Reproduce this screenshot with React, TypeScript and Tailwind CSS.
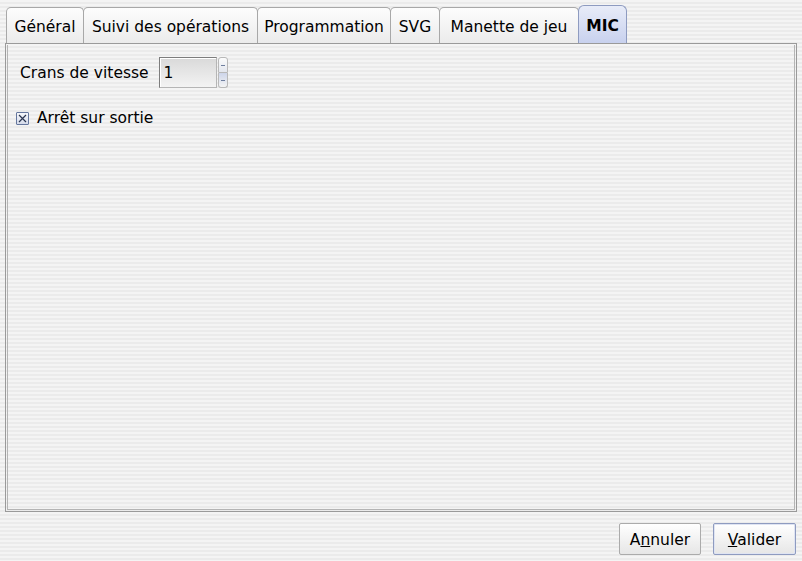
import React from 'react';

const tabs = [
  { label: 'Général', width: 'w-[78px]' },
  { label: 'Suivi des opérations', width: 'w-[175px]' },
  { label: 'Programmation', width: 'w-[134px]' },
  { label: 'SVG', width: 'w-[50px]' },
  { label: 'Manette de jeu', width: 'w-[140px]' },
];

const stripes =
  'bg-[repeating-linear-gradient(to_bottom,#f4f4f4_0px,#f4f4f4_2px,#ebebeb_2px,#ebebeb_4px)]';

function SpinBox() {
  return (
    <div className="flex items-stretch h-[31px]">
      <div className="w-[58px] border border-[#7d7d7d] border-r-[#b5b5b5] border-b-[#b5b5b5] bg-[linear-gradient(to_bottom,#d9d9d9,#f3f3f3)] shadow-[inset_1px_1px_0_#ffffff] flex items-center pl-[4px] pt-[2px]">
        1
      </div>
      <div className="ml-px w-[10px] flex flex-col">
        <div className="flex-1 border border-[#b8b8b8] rounded-t-[3px] bg-[linear-gradient(to_bottom,#fbfbfb,#e3e6ee)] flex items-center justify-center">
          <div className="w-[4px] h-px bg-[#6f7f9f]" />
        </div>
        <div className="flex-1 border border-t-0 border-[#b8b8b8] rounded-b-[3px] bg-[linear-gradient(to_bottom,#cdd5ea,#f4f4f4)] flex items-center justify-center">
          <div className="w-[4px] h-px bg-[#6f7f9f]" />
        </div>
      </div>
    </div>
  );
}

function CheckBox() {
  return (
    <div className="w-[13px] h-[13px] shrink-0 border border-[#65779e] rounded-[1px] bg-[linear-gradient(to_bottom,#f6f7fb,#d5dbea)] flex items-center justify-center">
      <svg width="9" height="9" viewBox="0 0 9 9">
        <path d="M1 1 L8 8 M8 1 L1 8" stroke="#2a3550" strokeWidth="1.2" />
      </svg>
    </div>
  );
}

export default function App() {
  return (
    <div
      className={`w-[802px] h-[561px] ${stripes} font-['DejaVu_Sans',sans-serif] text-[15.5px] text-black flex flex-col`}
    >
      {/* Tab bar */}
      <div className="flex items-end h-[43px] pl-[6px]">
        {tabs.map((tab, i) => (
          <div
            key={tab.label}
            className={`${tab.width} h-[36px] ${i > 0 ? '-ml-px' : ''} border border-b-0 border-[#a8a8a8] rounded-t-[5px] bg-[linear-gradient(to_bottom,#fdfdfd,#ebebeb)] flex items-center justify-center whitespace-nowrap pt-[4px]`}
          >
            {tab.label}
          </div>
        ))}
        <div className="-ml-px w-[49px] h-[38px] border border-b-0 border-[#8e9bc0] rounded-t-[6px] bg-[linear-gradient(to_bottom,#e8ecf8,#c8d1ee)] flex items-center justify-center font-bold pt-[4px]">
          MIC
        </div>
      </div>

      {/* Pane */}
      <div className="mx-[5px] h-[469px] border border-[#9a9a9a] p-px">
        <div className="h-full border border-[#b4b4b4] border-t-0 pl-[12px] pt-[12px]">
          <div className="flex items-center gap-[10px]">
            <span className="pt-[2px]">Crans de vitesse</span>
            <SpinBox />
          </div>
          <div className="flex items-center gap-[8px] mt-[19px] -ml-[4px]">
            <CheckBox />
            <span>Arrêt sur sortie</span>
          </div>
        </div>
      </div>

      {/* Buttons */}
      <div className="flex justify-end gap-[12px] pr-[6px] pt-[11px]">
        <button className="w-[82px] h-[32px] pt-[3px] border border-[#ababab] rounded-[2px] bg-[linear-gradient(to_bottom,#ffffff,#e6e6e6)]">
          A<span className="underline">n</span>nuler
        </button>
        <button className="w-[83px] h-[32px] pt-[3px] border border-[#8e9bc0] rounded-[2px] bg-[linear-gradient(to_bottom,#ffffff,#e6e6e6)] shadow-[inset_0_0_0_1px_#dfe4f2]">
          <span className="underline">V</span>alider
        </button>
      </div>
    </div>
  );
}
